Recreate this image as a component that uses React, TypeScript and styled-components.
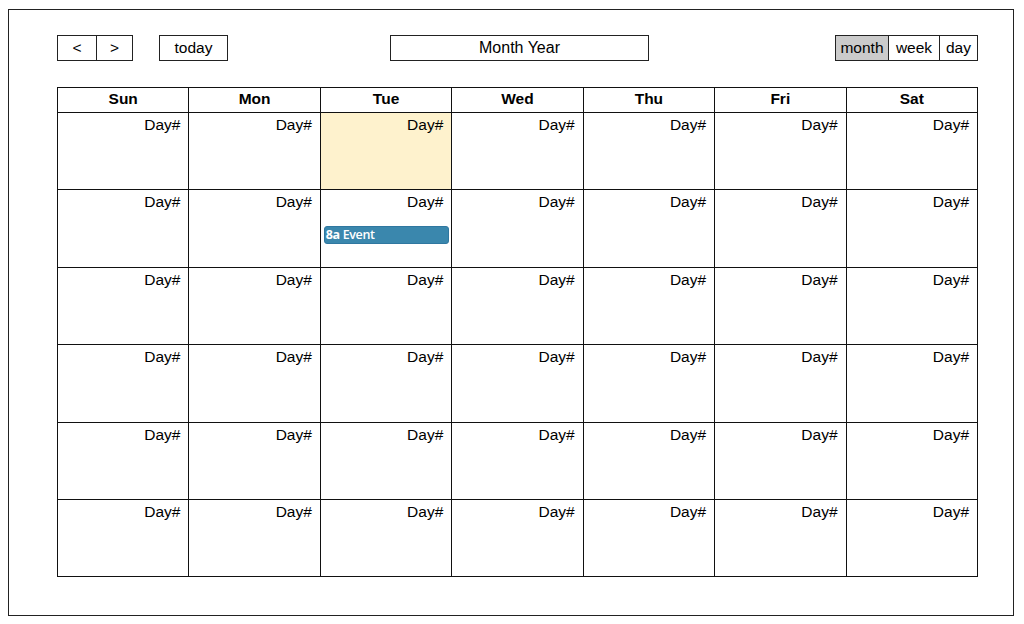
import styled, { createGlobalStyle } from 'styled-components';

const GlobalStyle = createGlobalStyle`
  body {
    margin: 9px 8px;
    background: #fff;
    font-family: "Liberation Sans", Arial, Helvetica, sans-serif;
    color: #000;
  }
`;

const Frame = styled.div`
  box-sizing: border-box;
  width: 1006px;
  height: 607px;
  border: 1px solid #222;
  padding: 25px 0 0 48px;
`;

const Toolbar = styled.div`
  width: 921px;
  height: 26px;
  display: flex;
  align-items: stretch;
  margin-bottom: 26px;
`;

const Group = styled.div`
  display: flex;
  align-items: stretch;
  gap: 26px;
`;

const ButtonRow = styled.div<{ $right?: boolean }>`
  display: flex;
  border: 1px solid #222;
  margin-left: ${(p) => (p.$right ? 'auto' : '0')};
`;

const Button = styled.button<{ $width: number; $active?: boolean }>`
  box-sizing: border-box;
  width: ${(p) => p.$width}px;
  margin: 0;
  padding: 0;
  border: 0;
  border-left: 1px solid #222;
  background: ${(p) => (p.$active ? '#cbcbcb' : '#fff')};
  font-family: "Liberation Sans", Arial, sans-serif;
  font-size: 15.5px;
  color: #000;
  line-height: 24px;
  &:first-child {
    border-left: 0;
  }
`;

const Title = styled.div`
  box-sizing: border-box;
  width: 259px;
  border: 1px solid #222;
  text-align: center;
  font-size: 16px;
  line-height: 23px;
  margin-left: 162px;
`;

const Table = styled.table`
  width: 921px;
  border-collapse: collapse;
  table-layout: fixed;
`;

const HeadCell = styled.th`
  border: 1px solid #111;
  height: 21px;
  padding: 0 0 3px 0;
  font-size: 15.5px;
  font-weight: bold;
  text-align: center;
`;

const DayCell = styled.td<{ $today?: boolean }>`
  border: 1px solid #111;
  height: 77.4px;
  padding: 3px 0 0 0;
  vertical-align: top;
  background: ${(p) => (p.$today ? '#fef2cd' : '#fff')};
  box-sizing: border-box;
`;

const DayNum = styled.div`
  text-align: right;
  padding-right: 8px;
  font-size: 15.5px;
  line-height: 17px;
`;

const Event = styled.div`
  margin: 16px 2px 0 3px;
  height: 18px;
  box-sizing: border-box;
  border: 1px solid #2f77a0;
  border-radius: 3px;
  background: #3a87ad;
  color: #fff;
  font-family: "Open Sans", "DejaVu Sans", sans-serif;
  font-size: 12.5px;
  font-weight: 600;
  letter-spacing: -0.4px;
  line-height: 16px;
  padding-left: 1px;
  white-space: nowrap;
  overflow: hidden;
`;

const Time = styled.b`
  font-weight: 700;
  margin-right: 3px;
`;

const days = ['Sun', 'Mon', 'Tue', 'Wed', 'Thu', 'Fri', 'Sat'];
const weeks = [0, 1, 2, 3, 4, 5];

export default function App() {
  return (
    <>
      <GlobalStyle />
      <Frame>
        <Toolbar>
          <Group>
            <ButtonRow>
              <Button $width={38}>&lt;</Button>
              <Button $width={36}>&gt;</Button>
            </ButtonRow>
            <ButtonRow>
              <Button $width={67}>today</Button>
            </ButtonRow>
          </Group>
          <Title>Month Year</Title>
          <ButtonRow $right>
            <Button $width={52} $active>month</Button>
            <Button $width={51}>week</Button>
            <Button $width={38}>day</Button>
          </ButtonRow>
        </Toolbar>
        <Table>
          <thead>
            <tr>
              {days.map((d) => (
                <HeadCell key={d}>{d}</HeadCell>
              ))}
            </tr>
          </thead>
          <tbody>
            {weeks.map((w) => (
              <tr key={w}>
                {days.map((d, i) => (
                  <DayCell key={d} $today={w === 0 && i === 2}>
                    <DayNum>Day#</DayNum>
                    {w === 1 && i === 2 && (
                      <Event>
                        <Time>8a</Time>Event
                      </Event>
                    )}
                  </DayCell>
                ))}
              </tr>
            ))}
          </tbody>
        </Table>
      </Frame>
    </>
  );
}
